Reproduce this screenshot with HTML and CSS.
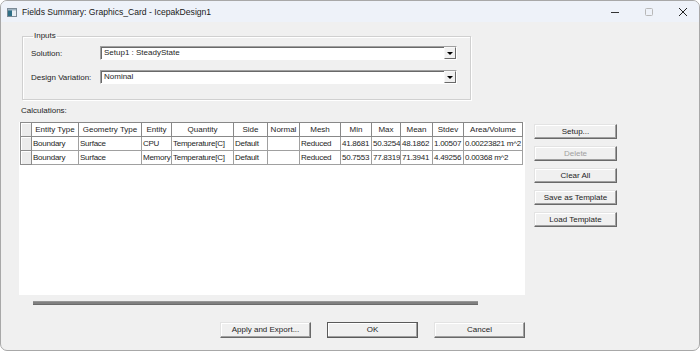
FILE: index.html
```html
<!DOCTYPE html>
<html>
<head>
<meta charset="utf-8">
<link rel="stylesheet" href="styles.css">
</head>
<body>
<div class="window">
  <div class="titlebar">
    <svg class="app-icon" width="10" height="9" viewBox="0 0 10 9">
      <rect x="0.5" y="0.5" width="9" height="8" fill="#e8eef3" stroke="#7b8a96"/>
      <rect x="1" y="1" width="4" height="7" fill="#2f6f86"/>
      <rect x="1" y="1" width="8" height="1.5" fill="#9fb3c1"/>
    </svg>
    <span class="title">Fields Summary: Graphics_Card - IcepakDesign1</span>
    <div class="controls">
      <svg class="ctl" width="10" height="10" viewBox="0 0 10 10"><path d="M1 5.5H9" stroke="#333" stroke-width="1"/></svg>
      <svg class="ctl" width="10" height="10" viewBox="0 0 10 10"><rect x="1.5" y="1.5" width="7" height="7" rx="1" fill="none" stroke="#b8b8b8"/></svg>
      <svg class="ctl" width="10" height="10" viewBox="0 0 10 10"><path d="M1 1L9 9M9 1L1 9" stroke="#222" stroke-width="1"/></svg>
    </div>
  </div>
  <div class="content">
    <fieldset class="inputs">
      <legend>Inputs</legend>
      <div class="field first">
        <span class="flabel">Solution:</span>
        <div class="combo"><span class="cval">Setup1 : SteadyState</span><span class="cbtn"><i class="tri"></i></span></div>
      </div>
      <div class="field">
        <span class="flabel">Design Variation:</span>
        <div class="combo"><span class="cval">Nominal</span><span class="cbtn"><i class="tri"></i></span></div>
      </div>
    </fieldset>
    <div class="calc-label">Calculations:</div>
    <div class="calc">
      <div class="grid-wrap">
        <table class="grid">
          <colgroup>
            <col class="w-rh"><col class="w-et"><col class="w-gt"><col class="w-en"><col class="w-qt"><col class="w-sd"><col class="w-nm"><col class="w-ms"><col class="w-mn"><col class="w-mx"><col class="w-me"><col class="w-st"><col class="w-av">
          </colgroup>
          <tr class="head">
            <th class="rh"></th><th>Entity Type</th><th>Geometry Type</th><th>Entity</th><th>Quantity</th><th>Side</th><th>Normal</th><th>Mesh</th><th>Min</th><th>Max</th><th>Mean</th><th>Stdev</th><th>Area/Volume</th>
          </tr>
          <tr>
            <td class="rh"></td><td>Boundary</td><td>Surface</td><td>CPU</td><td>Temperature[C]</td><td>Default</td><td></td><td>Reduced</td><td>41.8681</td><td>50.3254</td><td>48.1862</td><td>1.00507</td><td>0.00223821 m^2</td>
          </tr>
          <tr>
            <td class="rh"></td><td>Boundary</td><td>Surface</td><td>Memory</td><td>Temperature[C]</td><td>Default</td><td></td><td>Reduced</td><td>50.7553</td><td>77.8319</td><td>71.3941</td><td>4.49256</td><td>0.00368 m^2</td>
          </tr>
        </table>
      </div>
      <div class="side-buttons">
        <button class="btn">Setup...</button>
        <button class="btn disabled">Delete</button>
        <button class="btn">Clear All</button>
        <button class="btn">Save as Template</button>
        <button class="btn">Load Template</button>
      </div>
    </div>
    <div class="hscroll"><div class="thumb"></div></div>
    <div class="bottom-buttons">
      <button class="btn wide">Apply and Export...</button>
      <button class="btn wide default">OK</button>
      <button class="btn wide">Cancel</button>
    </div>
  </div>
</div>
</body>
</html>
```
FILE: styles.css
```css
html, body {
  margin: 0;
  padding: 0;
  background: #ffffff;
}
.window {
  width: 698px;
  height: 349px;
  border: 1px solid #a8a8a8;
  border-radius: 7px;
  overflow: hidden;
  background: #f0f0f0;
  display: flex;
  flex-direction: column;
  font-family: "Liberation Sans", Arial, sans-serif;
  font-size: 8px;
  color: #1e1e1e;
}
.titlebar {
  height: 21px;
  flex: none;
  background: #eef2f9;
  display: flex;
  align-items: center;
  padding-left: 6px;
}
.app-icon {
  flex: none;
  margin-top: 1px;
}
.title {
  margin-left: 5px;
  font-family: "Liberation Sans", Arial, sans-serif;
  font-size: 8.6px;
  color: #1a1a1a;
}
.controls {
  margin-left: auto;
  display: flex;
  align-items: center;
  gap: 24px;
  padding-right: 11px;
}
.ctl {
  display: block;
}
.content {
  padding-left: 18px;
  display: flex;
  flex-direction: column;
}
.inputs {
  margin: 9px 0 0 3px;
  padding: 0 0 15px 8px;
  width: 439px;
  border: 1px solid #d0d0d0;
  box-shadow: inset 1px 1px #fff, 1px 1px #fff;
  min-width: 0;
}
.inputs legend {
  padding: 0 1px;
  margin-left: 2px;
  font-size: 8px;
  line-height: 10px;
}
.field {
  display: flex;
  align-items: center;
  margin-top: 10px;
  height: 14px;
}
.field.first {
  margin-top: 5px;
}
.flabel {
  width: 69px;
  flex: none;
}
.combo {
  width: 357px;
  height: 14px;
  box-sizing: border-box;
  background: #fff;
  border: 1px solid;
  border-color: #a0a0a0 #ffffff #ffffff #a0a0a0;
  box-shadow: inset 1px 1px #696969;
  display: flex;
  align-items: center;
}
.cval {
  padding-left: 3px;
  flex: 1;
  line-height: 12px;
}
.cbtn {
  width: 12px;
  height: 12px;
  box-sizing: border-box;
  background: #f0f0f0;
  border: 1px solid;
  border-color: #f8f8f8 #696969 #696969 #f8f8f8;
  display: flex;
  align-items: center;
  justify-content: center;
}
.tri {
  display: block;
  width: 0;
  height: 0;
  border-left: 3px solid transparent;
  border-right: 3px solid transparent;
  border-top: 3px solid #000;
}
.calc-label {
  margin-top: 6px;
  margin-left: 2px;
  line-height: 10px;
  height: 10px;
}
.calc {
  margin-top: 6px;
  display: flex;
  align-items: flex-start;
}
.grid-wrap {
  width: 506px;
  height: 173px;
  background: #fff;
  box-sizing: border-box;
  padding-left: 1px;
  flex: none;
}
.grid {
  border-collapse: collapse;
  table-layout: fixed;
  width: 502px;
}
.w-rh { width: 11px; }
.w-et { width: 47px; }
.w-gt { width: 63px; }
.w-en { width: 30px; }
.w-qt { width: 62px; }
.w-sd { width: 34px; }
.w-nm { width: 32px; }
.w-ms { width: 41px; }
.w-mn { width: 31px; }
.w-mx { width: 29px; }
.w-me { width: 32px; }
.w-st { width: 31px; }
.w-av { width: 59px; }
.grid th, .grid td {
  height: 13px;
  padding: 0 0 0 1px;
  border: 1px solid #a0a0a0;
  font-size: 8px;
  line-height: 12px;
  letter-spacing: -0.25px;
  white-space: nowrap;
  overflow: hidden;
  text-align: left;
  font-weight: normal;
}
.grid th {
  text-align: center;
  padding: 0;
  letter-spacing: 0;
  background: #fff;
  border-color: #888888;
}
.grid .rh {
  background: #ececec;
  border-color: #8c8c8c;
  box-shadow: inset 1px 1px #fff;
}
.side-buttons {
  margin-left: 9px;
  padding-top: 2px;
  display: flex;
  flex-direction: column;
  gap: 7px;
}
.btn {
  font-family: "Liberation Sans", Arial, sans-serif;
  font-size: 8px;
  color: #1e1e1e;
  background: #f0f0f0;
  width: 83px;
  height: 15px;
  box-sizing: border-box;
  padding: 0;
  margin: 0;
  border: 1px solid;
  border-color: #e3e3e3 #696969 #696969 #e3e3e3;
  box-shadow: inset -1px -1px #a0a0a0, inset 1px 1px #ffffff;
  line-height: 12px;
}
.btn.disabled {
  color: #a0a0a0;
}
.hscroll {
  margin-top: 6px;
  padding-left: 14px;
  height: 4px;
}
.thumb {
  width: 445px;
  height: 4px;
  background: #808080;
  box-shadow: inset 0 -1px #6a6a6a, inset 0 1px #969696;
}
.bottom-buttons {
  margin-top: 17px;
  padding-left: 201px;
  display: flex;
  gap: 16px;
}
.btn.wide {
  width: 91px;
  height: 16px;
}
.btn.default {
  border-color: #5a5a5a;
  box-shadow: inset -1px -1px #a0a0a0, inset 1px 1px #ffffff;
}
```
